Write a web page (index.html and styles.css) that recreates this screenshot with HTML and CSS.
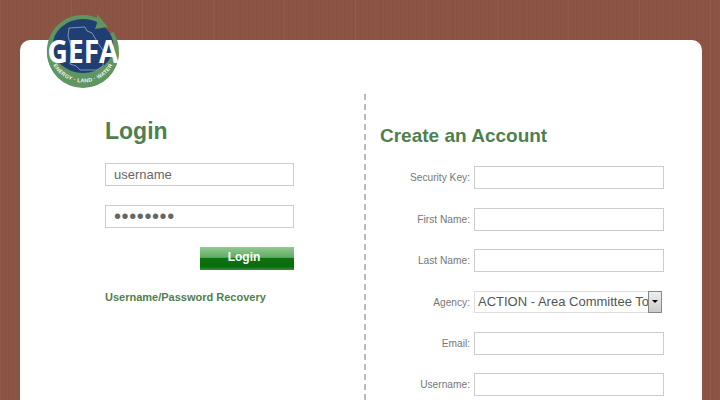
FILE: index.html
```html
<!DOCTYPE html>
<html lang="en">
<head>
<meta charset="utf-8">
<title>GEFA Login</title>
<link rel="stylesheet" href="styles.css">
</head>
<body>
<main class="card">
  <svg class="logo" width="80" height="84" viewBox="44 10 80 84" aria-label="GEFA logo">
    <defs>
      <path id="arc" d="M52 62 A33 31 0 0 0 114 62"/>
    </defs>
    <path d="M111.2 33 A33.5 33.5 0 1 1 98 21" fill="none" stroke="#5f9560" stroke-width="5"/>
    <path d="M47 52 A36 36 0 0 0 119 52 Z" fill="#5f9560"/>
    <ellipse cx="83" cy="46" rx="30.5" ry="27" fill="#1f3f74"/>
    <path d="M97 14 L108 27 L95 29 L97 23 Z" fill="#5f9560"/>
    <path d="M69 28 L85 27 L87 31 L92 33 L98 43 L104 52 L103 66 L97 70 L80 70 L76 66 L70 64 L72 50 L68 36 Z" fill="none" stroke="#a9b7cf" stroke-width=".7"/>
    <text class="logo-name" x="83" y="63" text-anchor="middle" textLength="71" lengthAdjust="spacingAndGlyphs">GEFA</text>
    <text class="logo-tag"><textPath href="#arc" startOffset="50%" text-anchor="middle">ENERGY · LAND · WATER</textPath></text>
  </svg>
  <section class="login">
    <h1 class="login-title">Login</h1>
    <input class="field" type="text" value="username" aria-label="Username">
    <input class="field field-pass" type="password" value="password" aria-label="Password">
    <div class="actions"><button class="btn" type="button">Login</button></div>
    <a class="recover" href="#">Username/Password Recovery</a>
  </section>
  <section class="register">
    <h2 class="reg-title">Create an Account</h2>
    <form class="rows">
      <label class="row"><span class="lbl">Security Key:</span><input class="field" type="text"></label>
      <label class="row"><span class="lbl">First Name:</span><input class="field" type="text"></label>
      <label class="row"><span class="lbl">Last Name:</span><input class="field" type="text"></label>
      <label class="row"><span class="lbl">Agency:</span>
        <span class="picker">
          <select class="pick"><option>ACTION - Area Committee To Improve Opportunities Now</option></select>
          <span class="pick-btn"></span>
        </span>
      </label>
      <label class="row"><span class="lbl">Email:</span><input class="field" type="text"></label>
      <label class="row"><span class="lbl">Username:</span><input class="field" type="text"></label>
    </form>
  </section>
</main>
</body>
</html>
```
FILE: styles.css
```css
html, body { margin: 0; height: 400px; overflow: hidden; }
body {
  background-color: #8c5444;
  background-image:
    repeating-linear-gradient(90deg, rgba(255,190,160,.06) 0 1px, transparent 1px 26px, rgba(60,20,10,.05) 26px 27px, transparent 27px 71px),
    repeating-linear-gradient(90deg, rgba(60,20,10,.025) 0 2px, transparent 2px 4px);
  font-family: "Liberation Sans", Arial, sans-serif;
  color: #666;
}
.card {
  position: relative;
  box-sizing: border-box;
  display: flex;
  width: 682px;
  height: 360px;
  margin: 40px 0 0 20px;
  background: #fff;
  border-radius: 10px 10px 0 0;
  padding-top: 54px;
}
.logo { position: absolute; left: 24px; top: -30px; }
.logo-name { font: 700 33px "Open Sans", "Liberation Sans", sans-serif; fill: #fff; }
.logo-tag { font: 700 5.4px "Liberation Sans", sans-serif; fill: #eef4ee; letter-spacing: .25px; }
.login {
  box-sizing: border-box;
  width: 344px;
  height: 306px;
  padding: 24px 0 0 85px;
}
.register {
  box-sizing: border-box;
  flex: 1;
  height: 306px;
  padding: 30px 0 0 14px;
  border-left: 2px dashed #bbb;
}
.login-title {
  margin: 0 0 18px;
  font-size: 23px;
  line-height: 27px;
  font-weight: 700;
  color: #4f7f4f;
}
.reg-title {
  margin: 0 0 18.4px;
  font-size: 19px;
  line-height: 24px;
  font-weight: 700;
  color: #4f7f4f;
}
.field {
  display: block;
  box-sizing: border-box;
  width: 190px;
  height: 23px;
  padding: 0 8px;
  border: 1px solid #ccc;
  background: #fff;
  border-radius: 0;
  outline: 0;
  font: 13px "Liberation Sans", sans-serif;
  color: #666;
}
.login .field { width: 189px; margin-bottom: 19px; }
.field-pass { font-size: 20px; letter-spacing: .6px; }
.actions { display: flex; justify-content: flex-end; width: 189px; }
.btn {
  width: 94px;
  height: 23px;
  padding: 0 6px 3px 0;
  border: 0;
  background: linear-gradient(#8fcb8d 0, #63ab63 45%, #0d7410 50%, #0a6b0c 85%, #3e8e3e 100%);
  color: #fff;
  font: 700 12px "Liberation Sans", sans-serif;
}
.recover {
  display: block;
  margin-top: 21px;
  font-size: 11px;
  font-weight: 700;
  color: #4f7f4f;
  text-decoration: none;
}
.rows { display: flex; flex-direction: column; gap: 18.4px; }
.row { display: flex; align-items: center; justify-content: flex-end; gap: 4px; width: 284px; }
.lbl { font-size: 10.2px; color: #777; }
.picker { display: flex; align-items: flex-start; width: 190px; height: 23px; }
.pick {
  appearance: none;
  box-sizing: border-box;
  width: 174px;
  height: 22px;
  padding: 0 0 0 3px;
  border: 1px solid #ddd;
  border-right: 0;
  border-radius: 0;
  background: #fff;
  font: 13px "Liberation Sans", sans-serif;
  color: #555;
}
.pick-btn {
  box-sizing: border-box;
  width: 14px;
  height: 22px;
  border: 1px solid #888;
  background: linear-gradient(#eee, #ccc);
  display: flex;
  align-items: center;
  justify-content: center;
}
.pick-btn::after {
  content: "";
  border: 3px solid transparent;
  border-top: 3px solid #000;
  border-bottom: 0;
}
```
